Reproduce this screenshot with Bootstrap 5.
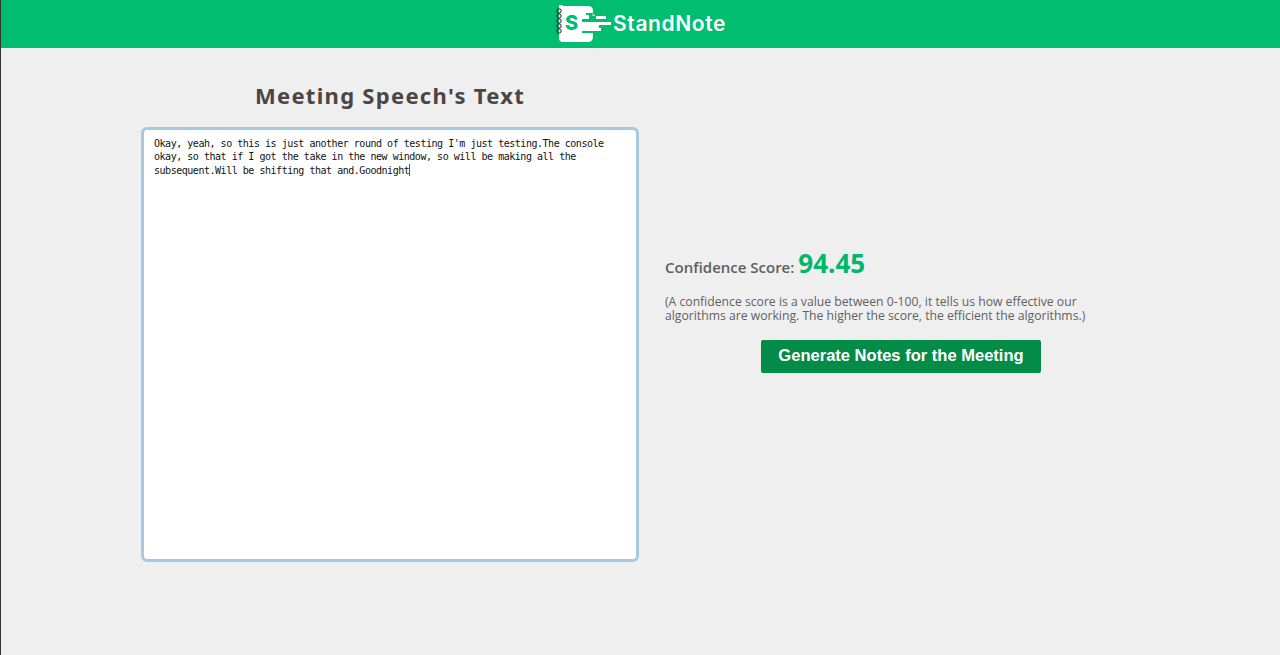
<!DOCTYPE html>
<html lang="en">
<head>
    <meta charset="UTF-8" />
    <meta name="viewport" content="width=device-width, initial-scale=1.0" />
    <title>StandNote</title>
    <link href="https://cdn.jsdelivr.net/npm/bootstrap@5.3.0/dist/css/bootstrap.min.css" rel="stylesheet" />
    <style>
        html, body {
            height: 100%;
        }

        body {
            background: #efefef;
            border-left: 1px solid #333;
            font-family: "Open Sans", "Noto Sans", sans-serif;
            overflow: hidden;
        }

        .top-bar {
            background: #00bd6f;
            height: 48px;
        }

        .brand-name {
            font-family: Inter, sans-serif;
            font-weight: 600;
            font-size: 21px;
            color: #fff;
            letter-spacing: .6px;
            margin-left: 2px;
        }

        .page-body {
            width: 998px;
            margin-left: 140px;
            gap: 26px;
        }

        .speech-col {
            width: 498px;
        }

        .speech-title {
            font-family: "Noto Sans", sans-serif;
            font-weight: 700;
            font-size: 22px;
            letter-spacing: 1.3px;
            color: #4a4644;
            line-height: 30px;
            margin: 32px 0 17px;
        }

        .speech-box {
            width: 498px;
            height: 435px;
            padding: 7px 10px;
            background: #fff;
            border: 3px solid #a6c8e2;
            border-radius: 6px;
            font-family: "DejaVu Sans Mono", monospace;
            font-size: 10px;
            letter-spacing: -.47px;
            line-height: 13.33px;
            color: #111;
        }

        .text-caret {
            display: inline-block;
            height: 12px;
            vertical-align: -2px;
            border-left: 1px solid #555;
        }

        .score-col {
            width: 472px;
            padding-top: 196px;
        }

        .score-label {
            font-size: 15px;
            font-weight: 600;
            color: #5f5f5f;
        }

        .score-value {
            font-size: 26px;
            font-weight: 700;
            color: #00b76c;
        }

        .score-note {
            font-size: 12.2px;
            line-height: 14px;
            color: #5f5f5f;
            margin: 12px 0 17px;
            width: 430px;
        }

        .notes-btn {
            background: #038c47;
            color: #fff;
            font-family: "Liberation Sans", sans-serif;
            font-weight: 700;
            font-size: 16.55px;
            width: 280px;
            height: 33px;
            padding: 0;
            border: 0;
            border-radius: 2px;
        }

        .notes-btn:hover {
            background: #037a3e;
            color: #fff;
        }
    </style>
</head>
<body>

    <!-- Header -->
    <header class="top-bar d-flex justify-content-center align-items-center">
        <svg width="56" height="38" viewBox="556 5 56 38" aria-label="StandNote logo">
            <!-- notebook body, right edge stepped into speed lines -->
            <path d="M564 6h25q5 0 5 5v2h-7v2h3v4h-7v3h29v3h-12v3h2v3h-19v2h11v3q0 6-5 6h-25q-4 0-4-4v-33q0-4 4-4z" fill="#fff" />
            <rect x="597" y="16" width="10" height="3" fill="#fff" />
            <rect x="583" y="20" width="24" height="2" fill="#00bd6f" />
            <rect x="593" y="14.500" width="3" height="1" fill="#fff" />
            <g fill="none" stroke="#222" stroke-width="1">
                <circle cx="560" cy="11" r="2.2" />
                <circle cx="560" cy="16" r="2.2" />
                <circle cx="560" cy="21" r="2.2" />
                <circle cx="560" cy="26" r="2.2" />
                <circle cx="560" cy="31" r="2.2" />
            </g>
            <text x="566" y="30" font-family="Inter, sans-serif" font-weight="800" font-size="20" fill="#00bd6f">S</text>
        </svg>
        <span class="brand-name">StandNote</span>
    </header>

    <!-- Content -->
    <main class="page-body d-flex">
        <div class="speech-col">
            <h2 class="speech-title text-center">Meeting Speech's Text</h2>
            <div class="speech-box" role="textbox" aria-multiline="true">Okay, yeah, so this is just another round of testing I'm just testing.The console okay, so that if I got the take in the new window, so will be making all the subsequent.Will be shifting that and.Goodnight<span class="text-caret"></span></div>
        </div>
        <div class="score-col">
            <div class="score-label">Confidence Score: <span class="score-value">94.45</span></div>
            <p class="score-note">(A confidence score is a value between 0-100, it tells us how effective our algorithms are working. The higher the score, the efficient the algorithms.)</p>
            <div class="text-center">
                <button type="button" class="btn notes-btn">Generate Notes for the Meeting</button>
            </div>
        </div>
    </main>

</body>
</html>
